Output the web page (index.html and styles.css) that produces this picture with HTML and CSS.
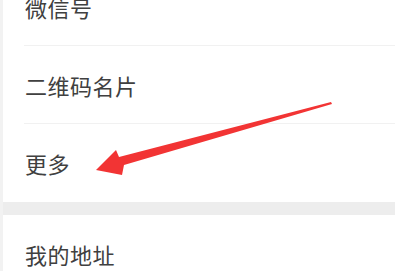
FILE: index.html
```html
<!DOCTYPE html>
<html>
<head>
<meta charset="utf-8">
<link rel="stylesheet" href="styles.css">
</head>
<body>
<div class="page">
  <div class="group first">
    <div class="row"><span class="label">微信号</span></div>
    <div class="row"><span class="label">二维码名片</span></div>
    <div class="row last"><span class="label">更多</span></div>
  </div>
  <div class="gap"></div>
  <div class="group">
    <div class="row last"><span class="label">我的地址</span></div>
  </div>
  <svg class="arrow" width="395" height="271" viewBox="0 0 395 271">
    <polygon points="331,102 119,157 116,150 96,170 122,175 124,165 332,104" fill="#f23434"/>
  </svg>
</div>
</body>
</html>
```
FILE: styles.css
```css
html, body {
  margin: 0;
  padding: 0;
  background: #ffffff;
  overflow: hidden;
}
.page {
  position: relative;
  width: 395px;
  height: 271px;
  overflow: hidden;
  border-left: 3px solid #f2f2f2;
  box-sizing: border-box;
  font-family: "Noto Sans CJK SC", "Noto Sans", sans-serif;
}
.group.first {
  margin-top: -32px;
}
.row {
  height: 77px;
  margin-left: 21px;
  border-bottom: 1px solid #f1f1f1;
  display: flex;
  align-items: center;
}
.row.last {
  border-bottom: none;
  height: 78px;
}
.label {
  font-size: 22px;
  color: #404040;
  letter-spacing: 0.5px;
  padding-left: 1px;
}
.gap {
  height: 13px;
  background: #ededed;
}
.arrow {
  position: absolute;
  left: -3px;
  top: 0;
}
```
